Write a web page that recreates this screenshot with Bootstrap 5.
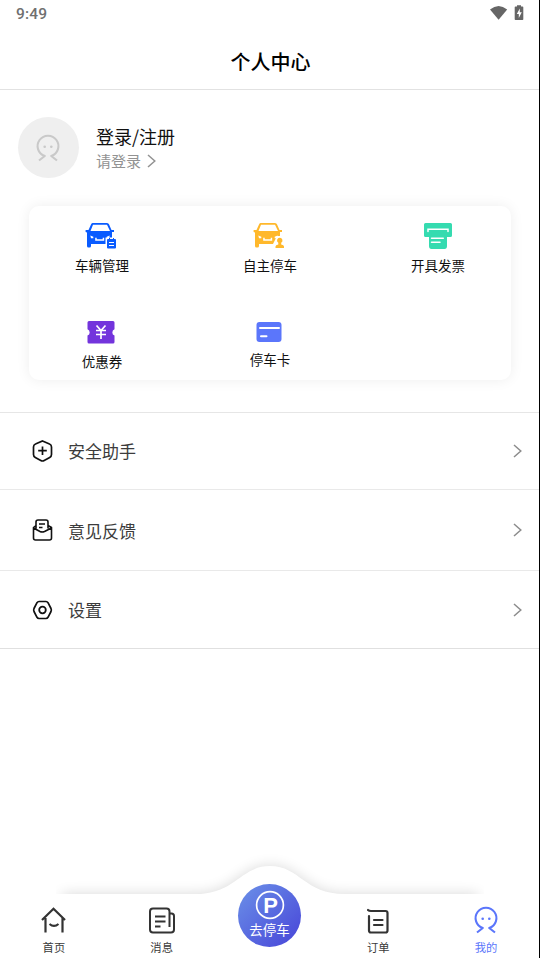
<!DOCTYPE html>
<html lang="zh-CN">
<head>
<meta charset="utf-8">
<meta name="viewport" content="width=device-width, initial-scale=1">
<title>个人中心</title>
<link href="https://cdn.jsdelivr.net/npm/bootstrap@5.3.0/dist/css/bootstrap.min.css" rel="stylesheet">
<style>
body{font-family:"Noto Sans CJK SC",sans-serif;color:#111;background:#fff;overflow:hidden}
svg{display:block;flex:none}
.screen{height:958px;border-right:1px solid #000}
.status{height:34px;padding:0 14px 6px 16px;color:#707070;font:500 15.5px/29px Roboto,sans-serif;letter-spacing:.2px}
.title-bar{height:56px;border-bottom:1px solid #e2e2e2;font-size:20px;font-weight:500;line-height:56px;padding-left:2px;color:#000}
.profile{height:116px;padding:27px 18px 0}
.avatar{width:61px;height:61px;background:#efefef}
.avatar svg{color:#c9c9c9;margin-right:2px}
.who{margin-left:17px;padding-top:7px}
.who-name{font-size:18px;line-height:25px}
.who-hint{font-size:15px;line-height:23px;color:#929292}
.who-hint svg{margin-left:6px}
.tools{height:174px;margin:0 28px 0 29px;border-radius:10px;box-shadow:0 0 14px rgba(0,0,0,.07)}
.tools .row{margin:0 -11px}
.tool{height:96px;padding-top:15px;font-size:13.5px;line-height:20px}
.tool svg{margin:0 2px 4px 0}
.tool-b{padding-top:14px}
.tool-b svg{margin-bottom:3px}
.menu{margin-top:32px;border-top:1px solid #e6e6e6}
.menu-item{height:77px;border-bottom:1px solid #e9e9e9;padding:0 17px 0 32px;font-size:17px;color:#3c3c3c}
.menu-item:nth-child(2){height:81px}
.menu-item:nth-child(3){height:78px;border-color:#e0e0e0}
.menu-item span{margin-left:15px}
.menu-item:nth-child(2) span{padding-top:1px}
.menu-item:nth-child(3) span{padding-top:1px}
.tabs{height:118px}
.wave{position:absolute;left:56px;top:0}
.tab-row{position:relative;padding-top:66px}
.tab{width:108px;font-size:11.3px;line-height:16px;color:#3a3a3a}
.tab svg{margin-bottom:5px}
.tab.on{color:#5b76fb}
.tab-r{padding-left:2px}
.park{width:63px;height:63px;margin:-22px 22.5px 0;background:linear-gradient(135deg,#6b91e8,#4744d8);color:#fff;font-size:13.5px;line-height:18px;padding-top:6px}
</style>
</head>
<body>
<svg width="0" height="0" class="position-absolute">
<symbol id="face" viewBox="0 0 26 28"><path d="M4 26.500l5.800-4.500A10.400 10.400 0 1 1 16.200 22l5.800 4.500" fill="none" stroke="currentColor" stroke-width="2.100" stroke-linejoin="round"/><circle cx="9.700" cy="12.800" r="1.300" fill="currentColor"/><circle cx="16.300" cy="12.800" r="1.300" fill="currentColor"/></symbol>
<symbol id="chev" viewBox="0 0 9 14"><path d="M1 1l6.800 6L1 13" fill="none" stroke="currentColor" stroke-width="1.500"/></symbol>
<symbol id="car" viewBox="0 0 32 28"><path fill="currentColor" fill-rule="evenodd" d="M7.500 2H22q1.600 0 2.100 1.500L26.500 9H29v2h-2v12H6v2q0 1.500-1.500 1.500H3.500Q2 26.500 2 25V11.500L.6 11V9H3.500L6 3.500Q6.400 2 7.500 2zM8 3.700L5.500 10h19.500L22 3.700z"/><path d="M5.300 14.500l3 1.200v1.600H6zM24.700 14.500l-3 1.200v1.600h2.500zM10.200 16.800h1.500v1.400h6v-1.400h1.500v3h-9z" fill="#fff"/></symbol>
</svg>
<main class="screen d-flex flex-column">
<div class="status d-flex justify-content-between align-items-start"><span>9:49</span>
<svg width="35" height="28" viewBox="0 0 35 28"><path d="M0 9.500q8.600-7 17.200 0L8.600 19.800z" fill="#666"/><path d="M25 6.500h2V5.200h4v1.300h1.500q.8 0 .8.800v12q0 .8-.8.800h-7q-.8 0-.8-.8v-12q0-.8.800-.8z" fill="#666"/><path d="M29.800 8.500l-3 5.500h2v4l3-5.700h-2z" fill="#fff"/></svg></div>
<header class="title-bar text-center">个人中心</header>
<section class="profile d-flex">
<div class="avatar rounded-circle d-flex align-items-center justify-content-center"><svg width="26" height="28"><use href="#face"/></svg></div>
<div class="who"><div class="who-name">登录/注册</div><div class="who-hint d-flex align-items-center">请登录<svg width="9" height="14"><use href="#chev"/></svg></div></div>
</section>
<section class="tools"><div class="row g-0">
<div class="col-4 tool d-flex flex-column align-items-center"><svg width="32" height="30" viewBox="0 0 32 30" color="#095bff"><use href="#car" width="32" height="28"/><path d="M20.500 16.500H32V28H20.500z" fill="#fff"/><path d="M23 18h1v-1h1v1h3v-1h1v1h1q1 0 1 1v7.500q0 1-1 1h-7q-1 0-1-1V19q0-1 1-1z" fill="currentColor"/><path d="M24 21.500h5M24 24.500h5" stroke="#fff"/></svg>车辆管理</div>
<div class="col-4 tool d-flex flex-column align-items-center"><svg width="32" height="30" viewBox="0 0 32 30" color="#ffb82b"><use href="#car" width="32" height="28"/><path d="M20 23l4-8h8v13H20z" fill="#fff"/><path d="M26.700 16.800a2.700 2.700 0 0 1 1.500 5v1.600q2.800.4 2.800 2.200v1.400h-8.500v-1.400q0-1.800 2.800-2.200v-1.600a2.700 2.700 0 0 1 1.400-5z" fill="currentColor"/></svg>自主停车</div>
<div class="col-4 tool d-flex flex-column align-items-center"><svg width="28" height="30" viewBox="0 0 28 30" class="me-0"><path d="M1.500 2h25Q28 2 28 3.500v11q0 1.500-1.500 1.500H23v9q0 3-2.500 3h-13Q5 28 5 25v-9H1.500Q0 16 0 14.500v-11Q0 2 1.500 2z" fill="#35dbb0"/><path d="M4 10.500V8.300h20v2.200M7.500 17.300h11.800M7.500 21.300h8.500" fill="none" stroke="#fff" stroke-width="1.500" stroke-linecap="round"/></svg>开具发票</div>
<div class="col-4 tool tool-b d-flex flex-column align-items-center"><svg width="28" height="32" viewBox="0 0 28 32"><path d="M2 5h24q1.500 0 1.500 1.500v6.800a3.300 3.300 0 0 0 0 6.200V26q0 1.500-1.500 1.500H2Q.5 27.500.5 26v-6.500a3.300 3.300 0 0 0 0-6.200V6.500Q.5 5 2 5z" fill="#7334dc"/><path d="M9.500 9.500l4.500 5 4.500-5M9 14.500h10M9 18.500h10M14 14.500v8.500" fill="none" stroke="#fff" stroke-width="1.700"/></svg>优惠券</div>
<div class="col-4 tool tool-b d-flex flex-column align-items-center"><svg width="26" height="30" viewBox="0 0 26 30"><rect x=".5" y="6" width="25" height="20" rx="3" fill="#5b76fb"/><path d="M4 12h19M5 20.300h5.500" stroke="#fff" stroke-width="2" stroke-linecap="round"/></svg>停车卡</div>
</div></section>
<section class="menu">
<div class="menu-item d-flex align-items-center"><svg width="21" height="24" viewBox="0 0 21 24"><path d="M10.500 2l7 3q2 .8 2 3v7.500q0 2-1.800 3l-5.500 3q-1.700 1-3.400 0l-5.500-3q-1.800-1-1.800-3V8q0-2.200 2-3zM10.500 7.500v8.500M6.200 11.700h8.600" fill="none" stroke="#111" stroke-width="1.700"/></svg><span>安全助手</span><svg class="ms-auto" width="9" height="14" color="#8c8c8c"><use href="#chev"/></svg></div>
<div class="menu-item d-flex align-items-center"><svg width="21" height="22" viewBox="0 0 21 22"><path d="M4 9.500V3q0-2 2-2h8q2 0 2 2v6.500M4 6.500L1.500 8.500V19q0 2 2 2h14q2 0 2-2V8.500L16 6.500M1.500 9l6.500 3.500q2 1 4.500 0L19.500 9M7 5h6M7 8.500h3.500" fill="none" stroke="#111" stroke-width="1.600" stroke-linejoin="round"/></svg><span>意见反馈</span><svg class="ms-auto" width="9" height="14" color="#8c8c8c"><use href="#chev"/></svg></div>
<div class="menu-item d-flex align-items-center"><svg width="21" height="20" viewBox="0 0 21 20"><path d="M7 1.500h7q1.300 0 2 1.200l3 5.800q.7 1.500 0 3l-3 5.800q-.7 1.200-2 1.200H7q-1.300 0-2-1.200l-3-5.800q-.7-1.500 0-3l3-5.800q.7-1.200 2-1.200z" fill="none" stroke="#111" stroke-width="1.700"/><circle cx="10.500" cy="10" r="3.300" fill="none" stroke="#111" stroke-width="1.800"/></svg><span>设置</span><svg class="ms-auto" width="9" height="14" color="#8c8c8c"><use href="#chev"/></svg></div>
</section>
<nav class="tabs position-relative mt-auto">
<svg class="wave" width="428" height="118" viewBox="56 840 428 118"><defs><filter id="soft" x="-10%" y="-50%" width="120%" height="200%"><feGaussianBlur stdDeviation="7"/></filter></defs>
<path d="M62 894H195C236 894 240 866 270 866S304 894 345 894H478V958H62z" fill="#000" opacity=".15" filter="url(#soft)"/><path d="M56 894H195C236 894 240 866 270 866S304 894 345 894H484V958H56z" fill="#fff"/></svg>
<div class="tab-row d-flex align-items-start">
<div class="tab d-flex flex-column align-items-center"><svg width="26" height="28" viewBox="0 0 26 28"><path d="M1 14L12.500 2.700 24 14M4.500 12v14.500M21.500 12v14.500M8.500 18q4.500 3.800 9 0" fill="none" stroke="#333" stroke-width="2.200"/></svg>首页</div>
<div class="tab d-flex flex-column align-items-center"><svg width="26" height="28" viewBox="0 0 26 28"><path d="M20.500 21V5.500q0-3-3-3H4q-3 0-3 3v18q0 3 3 3h18q3 0 3-3V10q0-2.500-2.500-2.500h-2M6 10.500h10.500M6 15.500h10.500M6 20.500h5.500" fill="none" stroke="#333" stroke-width="2"/></svg>消息</div>
<div class="park rounded-circle d-flex flex-column align-items-center"><svg width="30" height="30" viewBox="0 0 30 30"><circle cx="15" cy="15" r="13.400" fill="none" stroke="#fff" stroke-width="1.700"/><text x="15.500" y="22.500" text-anchor="middle" font-family="Liberation Sans, sans-serif" font-weight="700" font-size="22" fill="#fff">P</text></svg>去停车</div>
<div class="tab tab-r d-flex flex-column align-items-center"><svg width="22" height="28" viewBox="0 0 22 28"><path d="M1 4Q2 5 4 5h14.500q2 0 2 2v17.500q0 2-2 2H4q-2 0-2-2V10M7 14h8.500M7 19h8.500" fill="none" stroke="#333" stroke-width="2.200" stroke-linecap="round"/></svg>订单</div>
<div class="tab tab-r on d-flex flex-column align-items-center"><svg width="26" height="28"><use href="#face"/></svg>我的</div>
</div></nav>
</main>
<script src="https://cdn.jsdelivr.net/npm/bootstrap@5.3.0/dist/js/bootstrap.bundle.min.js"></script>
</body>
</html>
